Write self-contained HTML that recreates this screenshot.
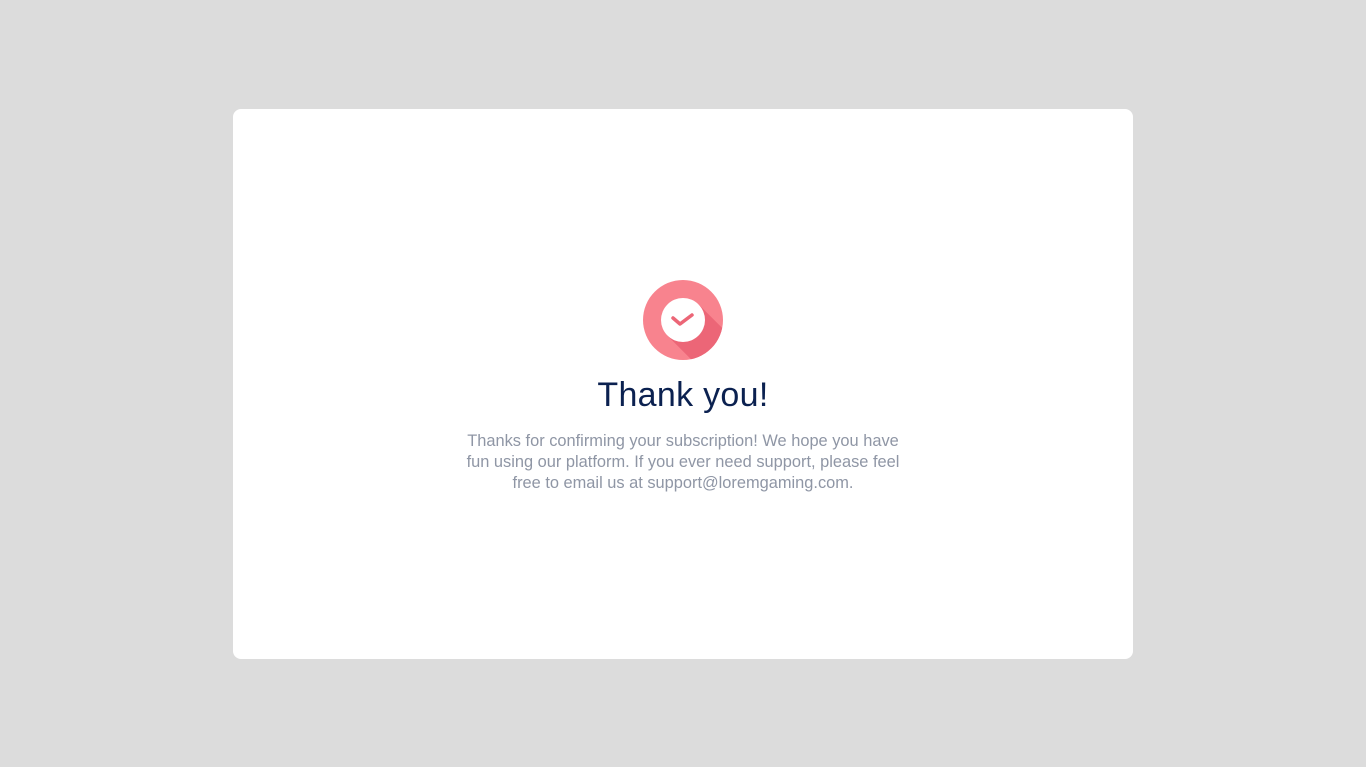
<!DOCTYPE html>
<html><head><style>
html,body{margin:0;padding:0;background:#dcdcdc;width:1366px;height:767px;overflow:hidden;font-family:"Liberation Sans",sans-serif}
.card{position:absolute;left:233px;top:109px;width:900px;height:550px;background:#fff;border-radius:8px}
.icon{position:absolute;left:643px;top:280px}
h1{position:absolute;left:0;width:1366px;top:376px;margin:0;text-align:center;font-weight:normal;font-size:34px;color:#0b2150;letter-spacing:0.3px}
p{position:absolute;left:383px;width:600px;top:431px;margin:0;text-align:center;font-size:16.4px;line-height:21px;color:#8f96a5;white-space:nowrap}
</style></head><body>
<div class="card"></div>
<svg class="icon" width="80" height="80" viewBox="0 0 80 80">
<defs><clipPath id="c"><circle cx="40" cy="40" r="40"/></clipPath></defs>
<circle cx="40" cy="40" r="40" fill="#f8838e"/>
<polygon clip-path="url(#c)" points="55.6,24.4 95,63.8 95,95 63.8,95 24.4,55.6" fill="#ec6677"/>
<circle cx="40" cy="40" r="22" fill="#fff"/>
<path d="M30 38 L37 44 L49 35" fill="none" stroke="#ec6677" stroke-width="3.5" stroke-linecap="round" stroke-linejoin="round"/>
</svg>
<h1>Thank you!</h1>
<p>Thanks for confirming your subscription! We hope you have<br>fun using our platform. If you ever need support, please feel<br>free to email us at support@loremgaming.com.</p>
</body></html>
